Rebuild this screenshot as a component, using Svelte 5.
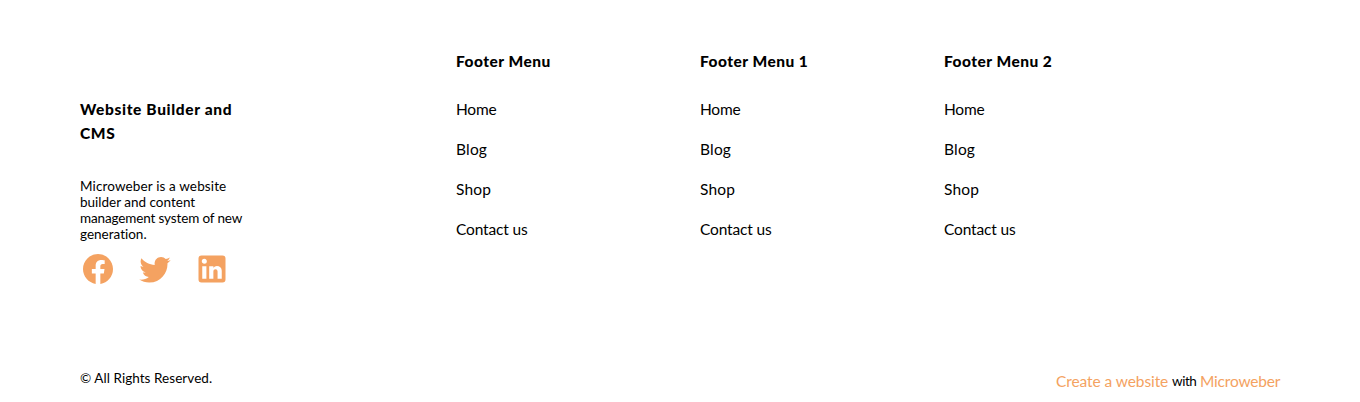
<script>
  const menus = ['Footer Menu', 'Footer Menu 1', 'Footer Menu 2'];
  const links = [
    { label: 'Home', tracking: -0.25 },
    { label: 'Blog', tracking: 0.2 },
    { label: 'Shop', tracking: 0.2 },
    { label: 'Contact us', tracking: -0.15 }
  ];
  const intro = [
    { text: 'Microweber is a website', tracking: 0.13 },
    { text: 'builder and content', tracking: 0 },
    { text: 'management system of new', tracking: -0.14 },
    { text: 'generation.', tracking: 0 }
  ];
  const socials = [
    { name: 'Facebook', path: 'M12 2.04C6.5 2.04 2 6.53 2 12.06C2 17.06 5.66 21.21 10.44 21.96V14.96H7.9V12.06H10.44V9.85C10.44 7.34 11.93 5.96 14.22 5.96C15.31 5.96 16.45 6.15 16.45 6.15V8.62H15.19C13.95 8.62 13.56 9.39 13.56 10.18V12.06H16.34L15.89 14.96H13.56V21.96A10 10 0 0 0 22 12.06C22 6.53 17.5 2.04 12 2.04Z' },
    { name: 'Twitter', path: 'M22.46 6C21.69 6.35 20.86 6.58 20 6.69C20.88 6.16 21.56 5.32 21.88 4.31C21.05 4.81 20.13 5.16 19.16 5.36C18.37 4.5 17.26 4 16 4C13.65 4 11.73 5.92 11.73 8.29C11.73 8.63 11.77 8.96 11.84 9.27C8.28 9.09 5.11 7.38 3 4.79C2.63 5.42 2.42 6.16 2.42 6.94C2.42 8.43 3.17 9.75 4.33 10.5C3.62 10.5 2.96 10.3 2.38 10V10.03C2.38 12.11 3.86 13.85 5.82 14.24C5.19 14.41 4.53 14.43 3.89 14.31C4.43 16 6 17.26 7.89 17.29C6.43 18.45 4.58 19.13 2.56 19.13C2.22 19.13 1.88 19.11 1.54 19.07C3.44 20.29 5.7 21 8.12 21C16 21 20.33 14.46 20.33 8.79C20.33 8.6 20.33 8.42 20.32 8.23C21.16 7.63 21.88 6.87 22.46 6Z' },
    { name: 'LinkedIn', path: 'M19 3A2 2 0 0 1 21 5V19A2 2 0 0 1 19 21H5A2 2 0 0 1 3 19V5A2 2 0 0 1 5 3H19M18.5 18.5V13.2A3.26 3.26 0 0 0 15.24 9.94C14.39 9.94 13.4 10.46 12.92 11.24V10.13H10.13V18.5H12.92V13.57C12.92 12.8 13.54 12.17 14.31 12.17A1.4 1.4 0 0 1 15.71 13.57V18.5H18.5M6.88 8.56A1.68 1.68 0 0 0 8.56 6.88C8.56 5.95 7.81 5.19 6.88 5.19A1.69 1.69 0 0 0 5.19 6.88C5.19 7.81 5.95 8.56 6.88 8.56M8.27 18.5V10.13H5.5V18.5H8.27Z' }
  ];
</script>

<footer>
  <div class="main">
    <section class="about">
      <h2>Website Builder and<br />CMS</h2>
      <p>
        {#each intro as line}
          <span style="letter-spacing: {line.tracking}px">{line.text}</span>
        {/each}
      </p>
      <div class="socials">
        {#each socials as social}
          <a href="#top" aria-label={social.name}><svg viewBox="0 0 24 24"><path d={social.path} /></svg></a>
        {/each}
      </div>
    </section>
    {#each menus as menu}
      <nav>
        <h3>{menu}</h3>
        <ul>
          {#each links as link}
            <li><a href="#top" style="letter-spacing: {link.tracking}px">{link.label}</a></li>
          {/each}
        </ul>
      </nav>
    {/each}
  </div>
  <div class="bottom">
    <span class="rights">© All Rights Reserved.</span>
    <div class="credit">
      <a class="create" href="#top">Create a website</a>
      <span>with</span>
      <a class="brand" href="#top">Microweber</a>
    </div>
  </div>
</footer>

<style>
  :global(body) { margin: 0; background: #fff; }
  footer {
    box-sizing: border-box;
    height: 402px;
    padding: 49px 80px 0;
    overflow: hidden;
    color: #000;
    font-family: Lato, sans-serif;
    font-size: 15.5px;
    line-height: 24px;
    font-variant-ligatures: none;
  }
  a { color: inherit; text-decoration: none; }
  h2, h3, p, ul { margin: 0; padding: 0; font-size: inherit; }
  .main {
    display: grid;
    grid-template-columns: 376px 244px 244px 1fr;
    height: 317px;
  }
  .about { padding-top: 48px; white-space: nowrap; }
  h2, h3 { font-weight: 900; font-size: 15.5px; }
  h2 { letter-spacing: 0.64px; }
  h3 { letter-spacing: 0.47px; }
  p { margin-top: 33px; font-size: 13.5px; line-height: 16px; }
  p span { display: block; }
  .socials { display: flex; gap: 21px; margin-top: 9px; }
  .socials a { display: block; width: 36px; height: 36px; }
  svg { display: block; width: 36px; height: 36px; fill: #f4a261; }
  ul { margin-top: 24px; list-style: none; display: grid; gap: 16px; }
  .bottom { display: flex; justify-content: space-between; }
  .rights { font-size: 13.5px; letter-spacing: 0.05px; }
  .credit { display: flex; padding-top: 3px; white-space: nowrap; }
  .credit a { color: #f4a261; }
  .credit span { width: 24px; margin: 0 4px; font-size: 13.5px; letter-spacing: -0.45px; }
  .create { width: 112px; letter-spacing: -0.08px; }
  .brand { width: 80px; letter-spacing: -0.2px; }
</style>
